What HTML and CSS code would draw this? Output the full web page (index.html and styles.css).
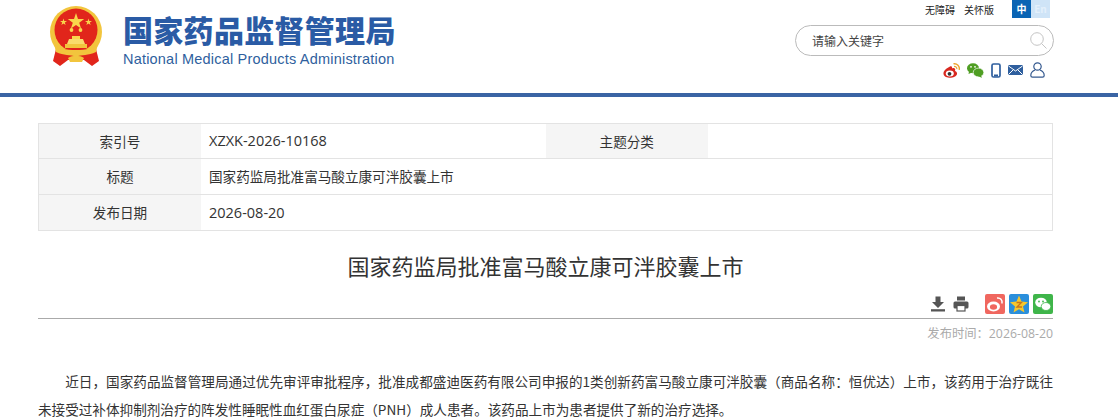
FILE: index.html
```html
<!DOCTYPE html>
<html lang="zh-CN">
<head>
    <meta charset="UTF-8">
    <title>国家药监局批准富马酸立康可泮胶囊上市</title>
    <link rel="stylesheet" href="styles.css">
</head>
<body>
    <div class="header">
        <div class="header-inner">
            <div class="brand">
                <svg class="emblem" viewBox="0 0 56 60">
                    <circle cx="28" cy="26" r="26" fill="#f2c53d"/>
                    <circle cx="28" cy="24" r="21.5" fill="#e1251b"/>
                    <polygon points="28,7 30,13 36.2,13 31.2,16.7 33.1,22.6 28,19 22.9,22.6 24.8,16.7 19.8,13 26,13" fill="#f9d64c"/>
                    <polygon points="15.5,12.5 16.3,15 19,15 16.8,16.5 17.6,19 15.5,17.5 13.4,19 14.2,16.5 12,15 14.7,15" fill="#f9d64c"/>
                    <polygon points="40.5,12.5 41.3,15 44,15 41.8,16.5 42.6,19 40.5,17.5 38.4,19 39.2,16.5 37,15 39.7,15" fill="#f9d64c"/>
                    <circle cx="23.5" cy="24" r="1.9" fill="#f9d64c"/>
                    <circle cx="32.5" cy="24" r="1.9" fill="#f9d64c"/>
                    <rect x="24" y="30" width="8" height="3" fill="#f9d64c"/>
                    <path d="M19 38 L21 33 H35 L37 38 Z" fill="#f9dc6c"/>
                    <rect x="17" y="38" width="22" height="4" fill="#f2c53d"/>
                    <path d="M8 43 L5 55 L12 60 L20 54 H36 L44 60 L51 55 L48 43 Z" fill="#e1251b"/>
                    <path d="M6 38 C12 46 44 46 50 38 L48 46 C40 50 34 48 28 51 C22 48 16 50 8 46 Z" fill="#f2c53d"/>
                    <path d="M20 52 C24 49 32 49 36 52 L34 56 H22 Z" fill="#f2c53d"/>
                </svg>
                <div class="brand-text">
                    <div class="brand-cn">国家药品监督管理局</div>
                    <div class="brand-en">National Medical Products Administration</div>
                </div>
            </div>
            <div class="tools">
                <div class="top-links">
                    <span class="top-link">无障碍</span>
                    <span class="top-link">关怀版</span>
                    <div class="lang">
                        <span class="lang-cn">中</span>
                        <span class="lang-en">En</span>
                    </div>
                </div>
                <div class="search">
                    <span class="search-text">请输入关键字</span>
                    <svg class="search-icon" viewBox="0 0 17 17">
                        <circle cx="7" cy="7" r="6.3" fill="none" stroke="#c4c4c4" stroke-width="1"/>
                        <path d="M11.5 11.5 L16.5 16.5" stroke="#c4c4c4" stroke-width="1"/>
                    </svg>
                </div>
                <div class="social">
                    <svg class="social-icon" viewBox="0 0 17 15">
                        <path d="M7 3.5 C3.5 5 0 8 0.5 11 C1 14 5 15 8 14.8 C11.5 14.5 14.5 12.5 14 10 C13.7 8.7 12.5 8.3 12 8 C13 5.5 11 4.5 9 5.5 C9.5 3.5 8.5 3 7 3.5 Z" fill="#d8281f"/>
                        <ellipse cx="6.8" cy="10.5" rx="4" ry="3" fill="#fff"/>
                        <circle cx="6.5" cy="10.8" r="1.9" fill="#333"/>
                        <path d="M10.5 0.8 C14 0.2 17 3 16.2 6.8" fill="none" stroke="#eda52e" stroke-width="1.4"/>
                        <path d="M11 3.3 C12.8 3.2 14.2 4.5 13.8 6.2" fill="none" stroke="#eda52e" stroke-width="1.2"/>
                    </svg>
                    <svg class="social-icon" viewBox="0 0 17 15">
                        <ellipse cx="6" cy="5.2" rx="6" ry="5" fill="#4f9e23"/>
                        <path d="M2 8.5 L1.5 11 L5 9.5 Z" fill="#4f9e23"/>
                        <ellipse cx="11.5" cy="9.5" rx="5.3" ry="4.4" fill="#4f9e23" stroke="#fff" stroke-width="0.7"/>
                        <path d="M14 12.5 L15 14.8 L11.5 13.5 Z" fill="#4f9e23"/>
                        <circle cx="4" cy="3.8" r="0.9" fill="#fff"/>
                        <circle cx="8" cy="3.8" r="0.9" fill="#fff"/>
                    </svg>
                    <svg class="social-icon phone" viewBox="0 0 10 15">
                        <rect x="1" y="1" width="8" height="13" rx="1.5" fill="none" stroke="#2f5f9e" stroke-width="1.7"/>
                        <rect x="3" y="11.5" width="4" height="2" fill="#2f5f9e"/>
                    </svg>
                    <svg class="social-icon mail" viewBox="0 0 15 12">
                        <rect x="0" y="1" width="15" height="10" rx="1.2" fill="#2f5f9e"/>
                        <path d="M0.5 2 L7.5 7 L14.5 2 M0.5 10.5 L5.5 5.5 M14.5 10.5 L9.5 5.5" fill="none" stroke="#fff" stroke-width="1"/>
                    </svg>
                    <svg class="social-icon user" viewBox="0 0 15 16">
                        <circle cx="7.5" cy="4.5" r="3.7" fill="none" stroke="#34598f" stroke-width="1.2"/>
                        <path d="M5 8 C2.5 9 0.8 11 0.8 13.5 C0.8 14.6 1.4 15.2 2.5 15.2 H12.5 C13.6 15.2 14.2 14.6 14.2 13.5 C14.2 11 12.5 9 10 8" fill="none" stroke="#34598f" stroke-width="1.2"/>
                    </svg>
                </div>
            </div>
        </div>
    </div>

    <div class="main">
        <table class="info">
            <tr>
                <td class="label">索引号</td>
                <td class="value latin">XZXK-2026-10168</td>
                <td class="label">主题分类</td>
                <td class="value"></td>
            </tr>
            <tr>
                <td class="label">标题</td>
                <td class="value" colspan="3">国家药监局批准富马酸立康可泮胶囊上市</td>
            </tr>
            <tr>
                <td class="label">发布日期</td>
                <td class="value latin" colspan="3">2026-08-20</td>
            </tr>
        </table>

        <h1 class="title">国家药监局批准富马酸立康可泮胶囊上市</h1>

        <div class="actions">
            <svg class="action-icon" viewBox="0 0 16 16">
                <path d="M5.5 0.5 H10.5 V6 H14 L8 12 L2 6 H5.5 Z" fill="#555"/>
                <rect x="1" y="13.2" width="14" height="2.3" fill="#555"/>
            </svg>
            <svg class="action-icon" viewBox="0 0 16 16">
                <rect x="4" y="0.5" width="8" height="4" fill="#555"/>
                <rect x="0.5" y="5.5" width="15" height="7" rx="1.5" fill="#555"/>
                <rect x="4" y="9.5" width="8" height="5.5" fill="#fff" stroke="#555" stroke-width="1.2"/>
            </svg>
            <div class="shares">
                <svg class="share" viewBox="0 0 20 20">
                    <rect width="20" height="20" rx="2" fill="#f0675f"/>
                    <ellipse cx="8.5" cy="12.5" rx="6.5" ry="5" fill="#fff"/>
                    <ellipse cx="8.5" cy="13" rx="3.6" ry="2.8" fill="#f0675f"/>
                    <path d="M12 4 C15.5 3.5 17.5 6 17 9.5" fill="none" stroke="#fff" stroke-width="1.5"/>
                </svg>
                <svg class="share" viewBox="0 0 20 20">
                    <rect width="20" height="20" rx="2" fill="#2a8fdc"/>
                    <polygon points="10,1.5 12.5,7.6 19,8.2 14,12.4 15.5,18.5 10,15.2 4.5,18.5 6,12.4 1,8.2 7.5,7.6" fill="#f7c72c"/>
                    <path d="M7.5 8.5 H12.5 L8 13 H13" fill="none" stroke="#c8741a" stroke-width="1.3"/>
                </svg>
                <svg class="share" viewBox="0 0 20 20">
                    <rect width="20" height="20" rx="2" fill="#3fb54a"/>
                    <ellipse cx="8" cy="8.5" rx="5.8" ry="4.8" fill="#fff"/>
                    <ellipse cx="13" cy="12.5" rx="4.8" ry="4" fill="#fff" stroke="#3fb54a" stroke-width="0.8"/>
                    <circle cx="6" cy="7.5" r="0.9" fill="#3fb54a"/>
                    <circle cx="10" cy="7.5" r="0.9" fill="#3fb54a"/>
                </svg>
            </div>
        </div>

        <div class="publish-time">发布时间：2026-08-20</div>

        <div class="article">
            <p>近日，国家药品监督管理局通过优先审评审批程序，批准成都盛迪医药有限公司申报的1类创新药富马酸立康可泮胶囊（商品名称：恒优达）上市，该药用于治疗既往未接受过补体抑制剂治疗的阵发性睡眠性血红蛋白尿症（PNH）成人患者。该药品上市为患者提供了新的治疗选择。</p>
        </div>
    </div>
</body>
</html>
```

FILE: styles.css
```css
body {
    margin: 0;
    background: #fff;
    color: #333;
    font-family: "Noto Sans CJK SC", "Liberation Sans", sans-serif;
    overflow: hidden;
}
.header {
    height: 93px;
    border-bottom: 4px solid #3a64a4;
}
.header-inner {
    width: 1015px;
    margin-left: 38px;
    display: flex;
    justify-content: space-between;
}
.brand {
    display: flex;
    padding: 6px 0 0 10px;
}
.emblem {
    width: 56px;
    height: 60px;
}
.brand-text {
    margin-left: 19px;
    padding-top: 4px;
}
.brand-cn {
    font-size: 30px;
    font-weight: 900;
    line-height: 38px;
    letter-spacing: 0.3px;
    color: #2a5ba5;
}
.brand-en {
    margin-top: 2px;
    font-family: "Liberation Sans", sans-serif;
    font-size: 14.5px;
    line-height: 18px;
    letter-spacing: 0.2px;
    color: #2f5f9e;
}
.tools {
    width: 260px;
}
.top-links {
    display: flex;
    justify-content: flex-end;
    align-items: center;
    height: 18px;
    padding-right: 3px;
    font-size: 10px;
    color: #222;
}
.top-link {
    margin-right: 9px;
}
.lang {
    display: flex;
    margin-left: 9px;
}
.lang-cn, .lang-en {
    width: 19px;
    height: 18px;
    line-height: 18px;
    text-align: center;
    font-size: 10px;
    font-weight: 700;
}
.lang-cn {
    background: #0a64b4;
    color: #fff;
}
.lang-en {
    background: #cfe4f7;
    color: #e4f0fb;
}
.search {
    display: flex;
    justify-content: space-between;
    align-items: center;
    width: 235px;
    height: 29px;
    margin: 7px 0 0 2px;
    padding: 0 6px 0 16px;
    border: 1px solid #bbb;
    border-radius: 16px;
}
.search-text {
    font-size: 12px;
    color: #444;
}
.search-icon {
    width: 17px;
    height: 17px;
}
.social {
    display: flex;
    justify-content: flex-end;
    align-items: center;
    gap: 7px;
    height: 18px;
    margin-top: 5px;
    padding-right: 8px;
}
.social-icon {
    width: 17px;
    height: 15px;
}
.phone {
    width: 10px;
    height: 15px;
}
.mail {
    width: 15px;
    height: 12px;
}
.user {
    width: 15px;
    height: 16px;
}
.main {
    width: 1015px;
    margin: 26px 0 0 38px;
}
.info {
    width: 100%;
    table-layout: fixed;
    border-collapse: collapse;
    border-left: 1px solid #e3e3e3;
    border-right: 1px solid #e3e3e3;
    font-size: 13.6px;
}
.info td {
    height: 34px;
    padding: 0 0 1px;
    border-top: 1px solid #e3e3e3;
    border-bottom: 1px solid #e3e3e3;
}
.info tr:first-child td {
    height: 33px;
}
.info .label {
    width: 162px;
    background: #f5f5f5;
    text-align: center;
}
.info .value {
    padding-left: 8px;
}
.info .latin {
    font-family: "Open Sans", sans-serif;
    font-size: 14.5px;
}
.title {
    margin: 19px 0 0;
    font-size: 22px;
    font-weight: 400;
    line-height: 30px;
    text-align: center;
    color: #333;
}
.actions {
    display: flex;
    justify-content: flex-end;
    align-items: center;
    height: 20px;
    margin-top: 14px;
    padding-bottom: 4px;
    border-bottom: 1px solid #aaa;
}
.action-icon {
    width: 16px;
    height: 16px;
    margin-right: 7px;
}
.shares {
    display: flex;
    gap: 4px;
    margin-left: 9px;
}
.share {
    width: 20px;
    height: 20px;
}
.publish-time {
    margin-top: 7px;
    text-align: right;
    font-family: "Open Sans", "Noto Sans CJK SC", sans-serif;
    font-size: 12.3px;
    line-height: 16px;
    color: #aaa;
}
.article {
    margin-top: 25px;
    font-size: 13.6px;
    line-height: 28px;
    color: #333;
}
.article p {
    margin: 0;
    text-indent: 2em;
    text-align: justify;
}
```
